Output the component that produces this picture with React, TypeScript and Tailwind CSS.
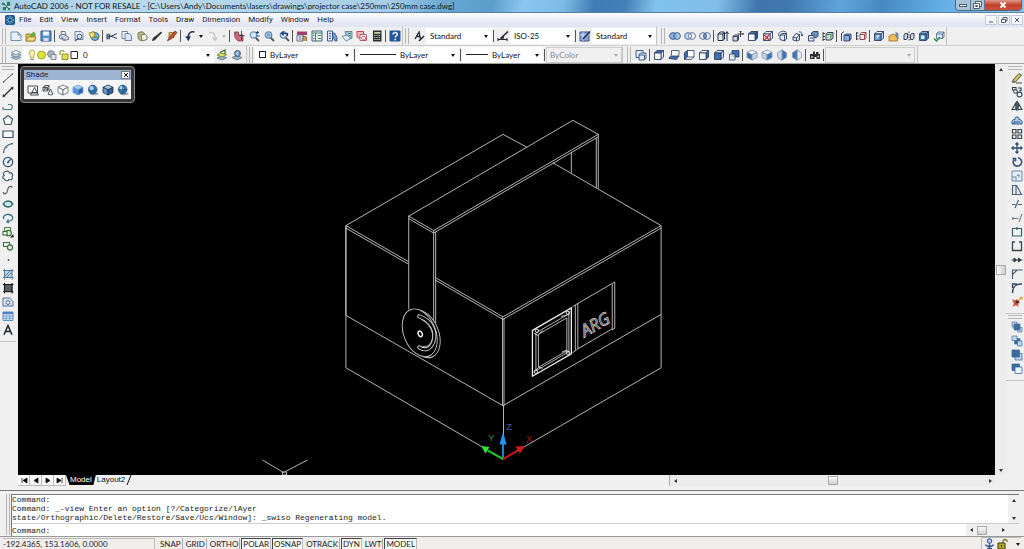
import type { ReactNode } from "react";

const N = "#2d3f66";
const B = "#4f86c6";
const L = "#b9d4f0";

function Box({ top = "#fff", front = "#fff", side = "#fff", stroke = N }) {
  return (
    <g stroke={stroke} strokeWidth="0.9" strokeLinejoin="round">
      <path d="M1.5 4 4 1.5h6.5L8 4z" fill={top} />
      <path d="M8 4l2.5-2.5V8L8 10.5z" fill={side} />
      <path d="M1.5 4H8v6.5H1.5z" fill={front} />
    </g>
  );
}

function Iso({ top = L, left = B, right = "#e8f0fa", stroke = N }) {
  return (
    <g stroke={stroke} strokeWidth="0.8" strokeLinejoin="round">
      <path d="M6 1l5 2.3L6 5.8 1 3.3z" fill={top} />
      <path d="M1 3.3l5 2.5V11L1 8.6z" fill={left} />
      <path d="M11 3.3L6 5.8V11l5-2.4z" fill={right} />
    </g>
  );
}

function Ball({ flat = false }) {
  return (
    <g>
      <ellipse cx="7" cy="9.8" rx="4.5" ry="1.4" fill="#9aa4ad" />
      <circle cx="5.7" cy="5.5" r="4.4" fill="#2f6fa8" stroke="#234f7c" strokeWidth="0.6" />
      <circle cx="4.6" cy="4.2" r="2.1" fill="#a8d5f2" />
      {flat && <path d="M5.7 1v9M1.4 5.5h8.6" stroke="#173f66" strokeWidth="0.6" />}
    </g>
  );
}

function Lens({ color = "#6f95c0" }) {
  return (
    <g fill="none">
      <path d="M7.5 7.5L11 11" stroke="#555" strokeWidth="1.8" />
      <circle cx="5.5" cy="5" r="3.2" fill="#dceaf8" stroke={color} strokeWidth="1.3" />
    </g>
  );
}

// every glyph sits on a 12x12 grid
const icons: Record<string, ReactNode> = {
  New: <path d="M1 2h7l3 3v5.5H1z M8 2v3h3" fill="#e8f1fb" stroke="#6d8fb5" />,
  Open: (
    <g>
      <path d="M1 4h4l1 1h4v6H1z" fill="#e6c34a" stroke="#8c6d1e" strokeWidth="0.8" />
      <path d="M4 5l5-3.5L11 4 7 8z" fill="#6fae4a" />
      <path d="M1 11l2-4h8l-2 4z" fill="#f4df80" stroke="#8c6d1e" strokeWidth="0.7" />
    </g>
  ),
  Save: (
    <g>
      <path d="M1 1h10v10H1z" fill="#5b8fc9" stroke="#34598a" />
      <path d="M3 1.5h6v4H3z" fill="#eef5fc" />
      <path d="M3.5 8h5v3h-5z" fill="#d5dde6" />
    </g>
  ),
  Plot: (
    <g stroke="#5f6c80" strokeWidth="0.9">
      <path d="M3 1.5h4l1 3.5H3.5z" fill="#fff" />
      <path d="M1.5 5.5L5 4l5.5 3v2.5L6 10.5 1.5 8z" fill="#cdd5e0" />
      <path d="M3 7.5l4 2" />
    </g>
  ),
  "Plot Preview": (
    <g>
      <path d="M2 1.5h6l2 2v6H2z" fill="#e4eefa" stroke="#6b86a8" />
      <circle cx="6.5" cy="6.5" r="2.4" fill="#cfe4f7" stroke="#4b5d78" />
      <path d="M5 8.5L2 11" stroke="#4b5d78" strokeWidth="1.5" />
    </g>
  ),
  Publish: (
    <g>
      <circle cx="7" cy="6.5" r="4" fill="#7fb3df" stroke="#3c6791" />
      <path d="M1 3l5-1.5 1 4.5-4 2z" fill="#f0dc6a" stroke="#8f7a2c" strokeWidth="0.8" />
      <path d="M6 8c2-2 3-1 4 0" stroke="#5c9b45" strokeWidth="1.4" />
    </g>
  ),
  Cut: <path d="M11 3.5L3.5 7M11 8.5L3.5 5.5M1 4.2h2.4V6H1zM1 7h2.4v1.8H1z" stroke="#455066" strokeWidth="1.1" />,
  Copy: (
    <g stroke="#5d7697" strokeWidth="0.9">
      <path d="M1 1.5h5.5v7H1z" fill="#fff" />
      <path d="M4 3.5h4.5L10.5 6v4.5H4z" fill="#d9e7f7" />
    </g>
  ),
  Paste: (
    <g stroke="#6a6f55" strokeWidth="0.9">
      <path d="M2 3l4-1.5L9 4v5l-5 1.5L2 8z" fill="#b9bd83" />
      <path d="M5 5l4-1 2 2v3.5L6 11z" fill="#eef1e2" />
    </g>
  ),
  "Match Properties": <path d="M1.5 10.5C2 8 3 7 4.5 6.5L10 2l.6.8-5 5c-1.1 1.7-2.6 2.7-4.1 2.7z" fill="#2d2a2a" stroke="#2d2a2a" strokeWidth="0.8" />,
  "Block Editor": (
    <g>
      <path d="M3 2.5h5v5H3z" fill="#e2b64f" stroke="#8c6a28" strokeWidth="0.8" />
      <path d="M1.5 10.8l2-4L9 1l2 1.5-5 6z" fill="#c2553a" stroke="#6b2a1f" strokeWidth="0.7" />
    </g>
  ),
  Undo: (
    <g>
      <path d="M10.5 2C6.5 1 4 3.5 4.2 8" stroke="#26365c" strokeWidth="1.6" />
      <path d="M1.2 6.5l3.3 4.7L6.8 6z" fill="#26365c" />
    </g>
  ),
  Redo: <path d="M2 2.5c3.5-.7 6 1 6 4V10M5.8 7.5L8 10.5l2.2-3" stroke="#c3c7cc" strokeWidth="1.3" />,
  Pan: (
    <g>
      <path d="M1.5 2h4v3H10v6H5L2 7.5z" fill="#c96a78" stroke="#7c3646" strokeWidth="0.8" />
      <path d="M8.5 1v9M6 5.5h5.5" stroke="#26406b" strokeWidth="0.9" />
    </g>
  ),
  "Zoom Realtime": (
    <g>
      <Lens />
      <path d="M9.5 1v3M8 2.5h3M8.5 6h3" stroke="#26406b" />
    </g>
  ),
  "Zoom Window": (
    <g>
      <Lens color="#5a7fae" />
      <path d="M4 3.5h3v3H4z" fill="#5e9ad1" />
    </g>
  ),
  "Zoom Previous": (
    <g>
      <Lens color="#5a7fae" />
      <path d="M9.5 6V3.5h-5M6 1.5l-2.5 2 2.5 2" stroke="#1e3766" strokeWidth="1.2" />
    </g>
  ),
  Properties: (
    <g>
      <path d="M1 1.5h10V5H1z" fill="#a33f6a" />
      <path d="M1 5h6v6H1z" fill="#fff" stroke="#5c6d8b" />
      <path d="M2.5 7h3M2.5 9h3" stroke="#42628e" />
      <path d="M6.5 11l1-5 3 1v4" fill="#c99a5a" stroke="#6c4f2c" strokeWidth="0.7" />
    </g>
  ),
  DesignCenter: (
    <g>
      <path d="M1 1h10v10H1z" fill="#e5f2ee" stroke="#3c6a80" />
      <path d="M1 3h10M4.5 3v8M7 5.5h3M7 8.5h3M2 5.5h1.5M2 8.5h1.5" stroke="#3f8272" />
    </g>
  ),
  "Tool Palettes": (
    <g>
      <path d="M1.5 1h5v10h-5z" fill="#dbe8f6" stroke="#3c5f90" />
      <path d="M3 3.5h2M3 6h2M3 8.5h2" stroke="#34598a" />
      <path d="M6.5 3h2L11 7v4H9L6.5 6.5z" fill="#6f9fcc" stroke="#26406b" strokeWidth="0.7" />
    </g>
  ),
  "Sheet Set Manager": (
    <g>
      <path d="M4 1.5h7v7H6z" fill="#9fc0d8" stroke="#56788f" strokeWidth="0.8" />
      <path d="M1 6.5L6 5l4 3.5L5 11z" fill="#e3edf5" stroke="#56788f" strokeWidth="0.8" />
      <path d="M7 3.5h3M7.5 5.5H10" stroke="#4e8b77" />
    </g>
  ),
  "Markup Set Manager": (
    <g>
      <path d="M1 1.5h6.5v6L5 9 1 7z" fill="#f4b9bd" stroke="#c8454c" />
      <path d="M4 4.5h6.5v6H4z" fill="#fff" stroke="#b0606a" />
      <path d="M5.5 8.5c0-3 4-3 4 0s-3 1-4 0z" stroke="#cc3b43" />
    </g>
  ),
  QuickCalc: (
    <g>
      <path d="M2 .5h8.5v11H2z" fill="#2c2f2c" />
      <path d="M3.3 2h6v1.8h-6z" fill="#c9d6a6" />
      <path d="M3.3 5.5h6M3.3 7.5h6M3.3 9.5h6" stroke="#d6d8d6" strokeDasharray="1.2 1" />
    </g>
  ),
  Help: (
    <g>
      <rect x=".5" y=".5" width="11" height="11" rx="1" fill="#23579c" />
      <path d="M4 4.5c0-2.7 4.2-2.5 4.2 0 0 1.5-2 1.5-2 3M6.2 8.8v1.4" stroke="#fff" strokeWidth="1.5" />
    </g>
  ),
  "Text Style": (
    <g stroke="#202838">
      <path d="M2 9l4-7 1.5 7M3.5 6.5h4" strokeWidth="1.3" />
      <path d="M6 11l5-5" stroke="#303030" strokeWidth="1.6" />
    </g>
  ),
  "Dim Style": (
    <g stroke="#26292f">
      <path d="M.5 9.5h10M1 8v3M10 8v3" strokeWidth="1.1" />
      <path d="M3.5 8.5L11 1.5M4 8.5l3-1" strokeWidth="1.7" />
    </g>
  ),
  "Table Style": (
    <g>
      <path d="M1 2h9v9H1z" fill="#8ba6d6" stroke="#3c5488" />
      <path d="M1 5h9M4 2v9" stroke="#e5edf9" strokeWidth="0.7" />
      <path d="M4 9l7-7.5" stroke="#24355a" strokeWidth="1.7" />
    </g>
  ),
  Union: (
    <g stroke="#33578a" strokeWidth="0.9" fill="#8fb2dd">
      <circle cx="4" cy="6" r="3.4" />
      <circle cx="8" cy="6" r="3.4" fillOpacity="0.6" />
    </g>
  ),
  Subtract: (
    <g stroke="#4a6894" strokeWidth="0.9">
      <circle cx="8" cy="6" r="3.4" fill="#fff" />
      <circle cx="4" cy="6" r="3.4" fill="#c3d6ee" />
      <path d="M6 3.5c-2 1.5-2 3.5 0 5 2-1.5 2-3.5 0-5z" fill="#fff" />
    </g>
  ),
  Intersect: (
    <g stroke="#4a6894" strokeWidth="0.9">
      <path d="M6 3.3c-2 1.5-2 3.9 0 5.4 2-1.5 2-3.9 0-5.4z" fill="#7fa5d6" />
      <circle cx="4" cy="6" r="3.4" />
      <circle cx="8" cy="6" r="3.4" />
    </g>
  ),
  "Extrude Faces": (
    <g>
      <path d="M1 4l2-2h4.5v7L6 10.5H1zM1 4h5v6.5M6 4l1.5-2" fill="#e7ecf4" stroke="#26304a" />
      <path d="M10 11V2M8.5 4L10 1.5 11.5 4" stroke="#26304a" />
    </g>
  ),
  "Move Faces": (
    <g stroke="#26304a" strokeWidth="0.9">
      <path d="M1 6.5h4.5V11H1zM1 6.5L2.5 5h4v4.5L5.5 11" fill="#cdd7e6" />
      <path d="M8.5 1v6M5.5 4h6M7.5 2l1-1 1 1M10.5 3l1 1-1 1" />
    </g>
  ),
  "Offset Faces": <Box top="#54708f" front="#fff" side="#2d568c" />,
  "Delete Faces": (
    <g>
      <Box />
      <path d="M2.5 5L7 10M7 5l-4.5 5" stroke="#cf2630" strokeWidth="1.3" />
    </g>
  ),
  "Rotate Faces": (
    <g stroke={N} strokeWidth="0.9">
      <path d="M3 5h4.5l2-1.5V9l-2 2L3 9.5zM3 5l2-1.5h4.5M7.5 5v6" fill="#e2eaf5" />
      <path d="M1.5 6C1 2 5 .5 8 1.5l1.5 1" />
    </g>
  ),
  "Taper Faces": (
    <g stroke={N} strokeWidth="0.9">
      <path d="M1 7l3-3.5 3.5 1V10l-3 1L1 10zM1 7l3.5 1v3M4.5 8l3-3.5" fill="#e2eaf5" />
      <path d="M7 2c2-1 3 1 3 4M9 4.5L10 6l1-1.5" />
    </g>
  ),
  "Copy Faces": (
    <g stroke={N} strokeWidth="0.9">
      <path d="M4.5 3L6 1.5h5V6L9.5 7.5h-5z" fill="#6d8dbb" />
      <path d="M1.5 5.5H7V11H1.5z" fill="#dce6f3" />
      <path d="M3 8h3" />
    </g>
  ),
  "Color Faces": (
    <g stroke="#26304a" strokeWidth="0.9">
      <path d="M1 2v9M1 3.5h2M1 6.5h2M1 9.5h2" />
      <path d="M4 4.5l1.5-2H11V8l-2 2H4z" fill="#c9dfd0" />
      <path d="M4 4.5h5V10M9 4.5l2-2" stroke="#2c7a4b" />
    </g>
  ),
  "Copy Edges": (
    <g stroke={N} strokeWidth="0.9">
      <path d="M1.5 11V3.5L4 1.5" stroke="#26304a" />
      <path d="M4 5.5L5.5 4H11v5l-1.5 2H4z" fill="#8caedb" />
      <path d="M4 5.5h5.5V11" />
    </g>
  ),
  "Color Edges": (
    <g strokeWidth="0.9">
      <path d="M1.5 2v8M1.5 3h2M1.5 6h2M1.5 9h2" stroke="#26304a" />
      <path d="M5 4.5l1.5-2H11v5l-1.5 2H5zM5 4.5h4.5v5M9.5 4.5l1.5-2" stroke="#8b3344" />
    </g>
  ),
  Imprint: (
    <g>
      <Box top="#e6eef8" front="#5e93d6" side={L} />
      <path d="M3 9l3.5-3.5M3 6h3" stroke="#fff" />
    </g>
  ),
  Clean: (
    <g>
      <path d="M1 6l4-2 4.5 2v5H1z" fill="#f0bd55" stroke="#9c6b28" strokeWidth="0.8" />
      <path d="M7.5 1.5l3 2V9l-3-2z" fill="#7a8699" />
    </g>
  ),
  Separate: (
    <g stroke="#26304a" strokeWidth="0.9" fill="#cdd6e4">
      <path d="M1 5l1-1.5h2.5V8l-1 1.5H1zM7.5 5l1-1.5H11V8l-1 1.5H7.5z" />
      <path d="M6 1.5V11" strokeDasharray="1.5 1" />
    </g>
  ),
  Shell: (
    <g>
      <Box top="#7fa6cf" front="#3f7ab0" side={B} />
      <path d="M3 5.5h3.5V9H3z" fill="#dff0f4" />
    </g>
  ),
  Check: (
    <g>
      <path d="M3.5 4L5 2h6v5L9.5 8.5h-6zM3.5 4h6v4.5M9.5 4L11 2" fill="#dfeaf3" stroke="#44608a" strokeWidth="0.8" />
      <path d="M1 8.5L3.5 11 7 7" stroke="#2f9a4d" strokeWidth="1.6" />
    </g>
  ),
  Layers: (
    <g stroke="#6b8196" strokeWidth="0.8">
      <path d="M1 8.5l5-2 5 2-5 2z" fill="#9db8c9" />
      <path d="M1 6l5-2 5 2-5 2z" fill="#c4d6e0" />
      <path d="M1 3.5l5-2 5 2-5 2z" fill="#f3f7fa" />
    </g>
  ),
  "Make Layer Current": (
    <g strokeWidth="0.8">
      <path d="M1 9l4-2 6 1.5L6 11z" fill="#9db8c9" stroke="#55708a" />
      <path d="M1 6l4-2 6 1.5L6 8z" fill="#dfe36b" stroke="#6a7a2c" />
      <path d="M4 3.5L9 1v4" stroke="#3d6b33" strokeWidth="1.2" />
    </g>
  ),
  "Layer Previous": (
    <g strokeWidth="0.8">
      <path d="M1 8.5l5-2 5 2L6 11z" fill="#9db8c9" stroke="#55708a" />
      <circle cx="6.5" cy="4.5" r="3" fill="#7095bd" stroke="#2c4c78" />
      <path d="M7.5 3L5 4.5 7.5 6" stroke="#fff" />
    </g>
  ),
  "Named Views": (
    <g stroke="#34507c" strokeWidth="0.9">
      <path d="M1 1.5h7v7H1z" fill="#e2ebf6" />
      <path d="M4 6l1.5-2H11v5l-1.5 2H4zM4 6h5.5v5" fill="#dfe9f6" />
    </g>
  ),
  "Top View": <Box top="#3f6fb3" />,
  "Bottom View": (
    <g stroke={N} strokeWidth="0.8" fill="#fff">
      <path d="M3.5 1.5H11V6L8 9H1l2.5-3z" />
      <path d="M1 9.5L3.5 7H11l-2.5 3.5z" fill="#3f6fb3" />
    </g>
  ),
  "Left View": (
    <g stroke={N} strokeWidth="0.8">
      <path d="M4 1.5h7V8l-3 2.5H1.5V4z" fill="#fff" />
      <path d="M1.5 4l3-2.5V8l-3 2.5z" fill="#3f6fb3" />
      <path d="M4.5 8H11" />
    </g>
  ),
  "Right View": <Box side="#3f6fb3" />,
  "Front View": <Box front="#3f6fb3" top="#dfe9f6" side="#dfe9f6" />,
  "Back View": (
    <g stroke={N} strokeWidth="0.8">
      <path d="M4 1.5h7V8H4z" fill="#3f6fb3" />
      <path d="M1.5 5H7v6H1.5z" fill="#eef3fa" fillOpacity="0.8" />
    </g>
  ),
  "SW Isometric": <Iso top="#f2f6fb" left="#3f6fa3" right="#c6d6ea" stroke="#7d93b0" />,
  "SE Isometric": <Iso top="#f2f6fb" left="#c6d6ea" right="#3f76bd" stroke="#7d93b0" />,
  "NE Isometric": (
    <g stroke="#7d93b0" strokeWidth="0.8">
      <path d="M6 .8l4.500 3v4.5L6 11.2z" fill="#4674ae" />
      <path d="M6 .8v10.4L1.5 8.3V3.8z" fill="#c9d8ea" />
    </g>
  ),
  "NW Isometric": (
    <g stroke="#7d93b0" strokeWidth="0.8">
      <path d="M6 .8l4.5 3v4.5L6 11.2z" fill="#e3ecf7" />
      <path d="M6 .8v10.4L1.5 8.3V3.8z" fill="#4674ae" />
    </g>
  ),
  Camera: (
    <g fill="#2b2d30">
      <path d="M1 5h3V2.5h2V5h1V3h2.5v2H11v5H7.5V8h-2v2H1z" />
      <circle cx="9.2" cy="7.5" r="1" fill="#c8c8c8" />
      <circle cx="3" cy="8" r="1" fill="#c8c8c8" />
    </g>
  ),
  Line: (
    <g stroke="#4b5560">
      <path d="M1.5 10l9-8" />
      <path d="M1 10h1M10 2h1" strokeWidth="1.5" />
    </g>
  ),
  "Construction Line": (
    <g stroke="#26333d">
      <path d="M1 11L11 1" strokeWidth="1.3" />
      <path d="M9 2h1.5v1.5M1.5 8.5V10H3" strokeWidth="1.5" />
    </g>
  ),
  Polyline: <path d="M1 9.5h7c3 0 3-5 0-5H6M1 7v2.5" stroke="#557784" strokeWidth="1.2" />,
  Polygon: <path d="M6 1.5L10.5 5 9 10.5H3L1.5 5z" fill="#fff" stroke="#3e5b62" strokeWidth="1.2" />,
  Rectangle: <path d="M1 3h10v6.5H1z" fill="#f5f8fb" stroke="#3c4f63" strokeWidth="1.2" />,
  Arc: <path d="M1.5 11C1.5 6 5 2 11 1.5M1 10h1.5M4 4.5l1.5 1M10 1v1.5" stroke="#3e6278" strokeWidth="1.2" />,
  Circle: (
    <g stroke="#34506f">
      <circle cx="6" cy="6" r="4.7" fill="#e9f1fa" strokeWidth="1.2" />
      <path d="M6 6l3-3M5 6.5h2" strokeWidth="1.3" />
    </g>
  ),
  "Revision Cloud": <path d="M3.5 1.5c2-1 4 0 4 1.5 3-.5 4 2 2.5 3.5 1.5 2-1 4-3 3-1 2-4.5 1.5-4.5-.5C0 8.5.5 6 2.200 5.5 1 4 1.5 2 3.5 1.5z" fill="#f3f5f8" stroke="#3e4f5c" strokeWidth="1.1" />,
  Spline: <path d="M1 8c1 3 4 2 4.5-1.5S8 1 10.5 3.5" stroke="#54606a" strokeWidth="1.2" />,
  Ellipse: (
    <g stroke="#26605f" strokeWidth="1.2">
      <ellipse cx="6" cy="6" rx="4.2" ry="2.8" fill="#cfe6ea" />
      <path d="M.5 6h2M9.5 6h2M6 2.5v1M6 8.5v1" />
    </g>
  ),
  "Ellipse Arc": <path d="M2 7C0 4 4 2 7 2.5c4 .5 5 4 2 6L5 10M6.5 7.5L5 10l2 1" stroke="#3e6d80" strokeWidth="1.3" />,
  "Insert Block": (
    <g strokeWidth="1.1">
      <path d="M2.5 1.5h6v5h-6z" fill="#e1f1df" stroke="#548a4c" />
      <circle cx="6.5" cy="7" r="2.8" fill="#d9ead6" stroke="#35682f" />
      <path d="M1 5.5h4V9H1z" fill="#fff" stroke="#35682f" />
      <path d="M8 11.5h3.5V8z" fill="#111" />
    </g>
  ),
  "Make Block": (
    <g strokeWidth="1.1">
      <path d="M1.5 2.5h6v4h-6z" fill="#eef6ec" stroke="#3c6d45" />
      <circle cx="8" cy="7.5" r="2.6" fill="#d9ead6" stroke="#3c6d45" />
    </g>
  ),
  Point: <circle cx="6.5" cy="6" r="0.9" fill="#2b5a66" />,
  Hatch: (
    <g>
      <path d="M2 2h8.5v8H2z" fill="#b9d4ec" />
      <path d="M1 2.5h10.5M1 9.5h10.5M2.5 1v10.5M10 1v10.5M3 8l5-5M5 9l4.5-4.5" stroke="#4a6f94" strokeWidth="0.9" />
    </g>
  ),
  Gradient: (
    <g>
      <path d="M2 2.5h8.5V10H2z" fill="#5a5f66" />
      <path d="M1 2.5h10.5M1 9.8h10.5M2.5 1v10.5M10 1v10.5" stroke="#17191c" strokeWidth="1.1" />
    </g>
  ),
  Region: (
    <g stroke="#4c6b97">
      <path d="M1 2h6.5L11 5.5V10H1z" fill="#e2ecf8" />
      <circle cx="6" cy="6.5" r="2" />
    </g>
  ),
  Table: (
    <g>
      <path d="M1 2h10v8.5H1z" fill="#cfe1f5" stroke="#5a8cc6" />
      <path d="M1 3h10" stroke="#4d80bd" strokeWidth="2" />
      <path d="M1 6h10M1 8.3h10M4.3 3v7.5M7.7 3v7.5" stroke="#6b9ad0" strokeWidth="0.8" />
    </g>
  ),
  "Multiline Text": <path d="M2 10.8L6 1.5l4 9.3M3.5 7.5h5" stroke="#23272b" strokeWidth="1.5" />,
  Erase: (
    <g>
      <path d="M1.5 8.5l6.5-7L10.5 3l-6 7z" fill="#c9c66c" stroke="#4f4c2a" strokeWidth="0.9" />
      <path d="M1.5 8.5l3 1.5-1 1H1z" fill="#8a6a60" />
      <path d="M5 11h6" stroke="#444" />
    </g>
  ),
  "Copy Object": (
    <g fill="#fff" stroke="#33444f" strokeWidth="1.1">
      <path d="M1.5 1.5H5V4H1.5z" />
      <circle cx="4.5" cy="5.5" r="1.8" />
      <circle cx="8.5" cy="8.5" r="2.4" />
      <path d="M7 2h3v3M8.7 4L10 5.3" fill="none" />
    </g>
  ),
  Mirror: <path d="M1 9.5h3.8V3zM11 9.5H7.2V3zM6 1v10" fill="#dfe6ec" stroke="#33444f" strokeWidth="1.1" />,
  Offset: <path d="M1 10V7.5c0-1.5 2-2 3-2C3 2 9 2 8 5.5c1 0 3 .5 3 2V10zM3 10V8h6" fill="#a9c8e6" stroke="#2f5b8c" />,
  Array: <path d="M1.5 1.5H5V5H1.5zM7 1.5h3.5V5H7zM1.5 7H5v3.5H1.5zM7 7h3.5v3.5H7z" fill="#f4f6f8" stroke="#39444d" strokeWidth="1.2" />,
  Move: <path d="M6 1v10M1 6h10M4.5 2.5L6 1l1.5 1.5M4.5 9.5L6 11l1.5-1.5M2.5 4.5L1 6l1.5 1.5M9.5 4.5L11 6 9.5 7.5" stroke="#2e4a6c" strokeWidth="1.3" />,
  Rotate: <path d="M3 3.5a4.2 4.2 0 1 0 4-1.7M1.5 2.5h3v3" stroke="#3a5278" strokeWidth="1.6" />,
  Scale: (
    <g fill="#e6edf5" stroke="#6e88a8">
      <path d="M1 1h10v10H1z" />
      <path d="M1 7h4v4M5.5 6L8 4.5v3" fill="none" />
    </g>
  ),
  Stretch: <path d="M1.5 1.5h4l5 9h-9zM5 2v8.5" fill="#e6edf5" stroke="#4c5d75" strokeWidth="1.1" />,
  Trim: <path d="M1 6.5h3.5M7 6.5h4M4 10l3.5-8" stroke="#4c6070" strokeWidth="1.2" />,
  Extend: <path d="M1 6.5h6.5M8 10l3-8M2 5v3" stroke="#75848e" strokeWidth="1.1" />,
  "Break at Point": <path d="M1.5 2.5h9V10h-9zM6 1v3" fill="#f0f6f2" stroke="#3c5c5c" strokeWidth="1.2" />,
  Break: <path d="M4 2H1.5v8.5h9V2H8" stroke="#3a434b" strokeWidth="1.3" />,
  Join: <path d="M.5 6h11M3 4l2.5 2L3 8zM7.500 4L10 6 7.500 8z" fill="#2b3036" stroke="#2b3036" strokeWidth="0.9" />,
  Chamfer: <path d="M1.5 11V6.5L6 2h5.5M1.5 6.5V2H6" stroke="#45596e" strokeWidth="1.1" />,
  Fillet: <path d="M1.5 11C1.5 5 4 2 11 2M1.5 6V2H6" stroke="#31465c" strokeWidth="1.3" />,
  Explode: (
    <g>
      <path d="M1 3l3 1.5L6 3l.5 2.5L9 6 7 8l.5 3L5 9l-3.5 2L3 7.5z" fill="#d04a38" />
      <path d="M6 6l4.5-4.5M9 1.5h2v2" stroke="#e0a23a" strokeWidth="1.4" />
      <circle cx="6.5" cy="6" r="1.4" fill="#33282a" />
    </g>
  ),
  "Bring to Front": (
    <g stroke="#44709f" strokeWidth="0.7">
      <path d="M1 1h5v5H1zM6.5 6.5H11V11H6.5z" fill="#bfd6ee" />
      <path d="M3 3h6v6H3z" fill="#3d6d9f" />
    </g>
  ),
  "Send to Back": (
    <g stroke="#44709f" strokeWidth="0.7">
      <path d="M3.5 3.5H9V9H3.5z" fill="#3d6d9f" />
      <path d="M1 1h5v4.5H1zM6.5 6H11v5H6.5z" fill="#bfd6ee" />
    </g>
  ),
  "Bring Above": (
    <g stroke="#34608f" strokeWidth="0.7">
      <path d="M4 4.5h7V11H4z" fill="#bfd6ee" />
      <path d="M1 1h7.5v7H1z" fill="#3d6d9f" />
    </g>
  ),
  "Send Under": (
    <g stroke="#34608f" strokeWidth="0.7">
      <path d="M1 1h7.5v6.5H1z" fill="#3d6d9f" />
      <path d="M4 4h7v6.5H4z" fill="#eaf1f9" />
    </g>
  ),
  "2D Wireframe": <path d="M1 2h9.5v7H1zM3.5 11l4-7.5 4 7.5zM5 8.5h5" fill="#fff" stroke="#33383e" strokeWidth="0.9" />,
  "3D Wireframe": (
    <g stroke="#3f464e" strokeWidth="0.9">
      <path d="M1 3.5l2-2h4V5L5.5 7H1zM1 3.5h4.5V7M5.5 3.5L7 1.5M3 1.5V5h4M3 5L1 7" />
      <path d="M6 10l2.5-5L11 10c-1 1.2-4 1.2-5 0z" fill="#e6e6e6" />
    </g>
  ),
  Hidden: <Iso top="#fff" left="#fff" right="#fff" stroke="#5a6068" />,
  "Flat Shaded": <Iso top="#a7d0f2" left="#4f93d6" right="#2c66ad" stroke="#6aa0d8" />,
  "Gouraud Shaded": <Ball />,
  "Flat Shaded, Edges On": <Iso top="#a7c8ec" left="#5f97cf" right="#35619c" stroke="#1d2f4d" />,
  "Gouraud Shaded, Edges On": <Ball flat />,
};

const ROW_ONE = {
  file: ["New", "Open", "Save"],
  plot: ["Plot", "Plot Preview", "Publish"],
  edit: ["Cut", "Copy", "Paste", "Match Properties", "Block Editor"],
  zoom: ["Pan", "Zoom Realtime", "Zoom Window", "Zoom Previous"],
  palettes: ["Properties", "DesignCenter", "Tool Palettes", "Sheet Set Manager", "Markup Set Manager", "QuickCalc"],
  booleans: ["Union", "Subtract", "Intersect"],
  faces: ["Extrude Faces", "Move Faces", "Offset Faces", "Delete Faces", "Rotate Faces", "Taper Faces", "Copy Faces", "Color Faces"],
  edges: ["Copy Edges", "Color Edges"],
  bodies: ["Imprint", "Clean", "Separate", "Shell", "Check"],
};

const ORTHO_VIEWS = ["Top View", "Bottom View", "Left View", "Right View", "Front View", "Back View"];
const ISO_VIEWS = ["SW Isometric", "SE Isometric", "NE Isometric", "NW Isometric"];

const DRAW_TOOLS = [
  "Line", "Construction Line", "Polyline", "Polygon", "Rectangle", "Arc", "Circle", "Revision Cloud", "Spline", "Ellipse",
  "Ellipse Arc", "Insert Block", "Make Block", "Point", "Hatch", "Gradient", "Region", "Table", "Multiline Text",
];

const MODIFY_TOOLS = [
  "Erase", "Copy Object", "Mirror", "Offset", "Array", "Move", "Rotate", "Scale", "Stretch", "Trim", "Extend",
  "Break at Point", "Break", "Join", "Chamfer", "Fillet", "Explode",
];

const ORDER_TOOLS = ["Bring to Front", "Send to Back", "Bring Above", "Send Under"];

const SHADE_TOOLS = [
  "2D Wireframe", "3D Wireframe", "Hidden", "Flat Shaded", "Gouraud Shaded", "Flat Shaded, Edges On", "Gouraud Shaded, Edges On",
];

const MENUS = ["File", "Edit", "View", "Insert", "Format", "Tools", "Draw", "Dimension", "Modify", "Window", "Help"];

const MODES = [
  { name: "SNAP", on: false },
  { name: "GRID", on: false },
  { name: "ORTHO", on: false },
  { name: "POLAR", on: true },
  { name: "OSNAP", on: true },
  { name: "OTRACK", on: false },
  { name: "DYN", on: true },
  { name: "LWT", on: false },
  { name: "MODEL", on: true },
];

function Tool({ name }: { name: string }) {
  return (
    <button type="button" aria-label={name} className="flex h-[14px] w-[15px] shrink-0 items-center justify-center">
      <svg viewBox="0 0 12 12" className="size-3" fill="none">
        {icons[name]}
      </svg>
    </button>
  );
}

function Tools({ names }: { names: string[] }) {
  return names.map((name) => <Tool key={name} name={name} />);
}

function Sep() {
  return (
    <div className="flex w-[3px] shrink-0 justify-center">
      <div className="h-3 w-px bg-[#555]" />
    </div>
  );
}

function Grip() {
  return (
    <div className="flex h-4 w-2 shrink-0 justify-center gap-0.5">
      <div className="w-px bg-[#b4b4b4]" />
      <div className="w-px bg-[#b4b4b4]" />
    </div>
  );
}

function FlatGrip() {
  return (
    <div className="flex h-1.5 w-full shrink-0 flex-col justify-center gap-0.5 px-0.5">
      <div className="h-px bg-[#b4b4b4]" />
      <div className="h-px bg-[#b4b4b4]" />
    </div>
  );
}

type Dir = "up" | "down" | "left" | "right";

const ARROWS: Record<Dir, string> = {
  up: "M1 4l2-3 2 3z",
  down: "M1 2l2 3 2-3z",
  left: "M4 1L1 3l3 2z",
  right: "M2 1l3 2-3 2z",
};

function Arrow({ dir = "down", color = "#111" }: { dir?: Dir; color?: string }) {
  return (
    <svg viewBox="0 0 6 6" className="size-1.5 shrink-0" fill={color}>
      <path d={ARROWS[dir]} />
    </svg>
  );
}

function ArrowButton({ dir, label }: { dir: Dir; label: string }) {
  return (
    <button type="button" aria-label={label} className="flex size-[11px] shrink-0 items-center justify-center">
      <Arrow dir={dir} color="#333" />
    </button>
  );
}

interface ComboProps {
  label: string;
  value: string;
  width: string;
  disabled?: boolean;
  children?: ReactNode;
}

function Combo({ label, value, width, disabled, children }: ComboProps) {
  return (
    <div
      className={`flex h-4 shrink-0 items-center gap-1 border pr-0.5 pl-[3px] ${width} ${
        disabled ? "border-[#cdcdcd] bg-[#f0f0f0] text-[#8a8a8a]" : "border-white bg-white text-[#111]"
      }`}
    >
      {children}
      <select
        aria-label={label}
        defaultValue={value}
        disabled={disabled}
        className="h-full min-w-0 flex-1 appearance-none bg-transparent font-['Lato',sans-serif] text-[8px] leading-3 outline-none"
      >
        <option value={value}>{value}</option>
      </select>
      <Arrow color={disabled ? "#aaa" : "#111"} />
    </div>
  );
}

function LayerFlags() {
  return (
    <svg viewBox="0 0 52 12" className="h-3 w-[52px] shrink-0" fill="none">
      <path d="M5 1a3 3 0 0 1 1.5 5.5V9h-3V6.5A3 3 0 0 1 5 1z" fill="#f7f0a0" stroke="#a89c3c" strokeWidth="0.8" />
      <path d="M3.5 10.5h3" stroke="#777" />
      <circle cx="14.5" cy="6" r="4" fill="#dfe436" stroke="#9ca12a" />
      <circle cx="24" cy="5" r="3.4" fill="#a9b3bc" stroke="#7c8791" />
      <path d="M24 5.5h5v5h-5z" fill="#dbe4ec" stroke="#7c8791" />
      <path d="M33 6V3c0-2 4-2 4 0" stroke="#8c9426" strokeWidth="1.2" />
      <path d="M35 5h6v5.5h-6z" fill="#dfe045" stroke="#8c9426" />
      <path d="M44 2.5h6.5v7H44z" fill="#fff" stroke="#222" />
    </svg>
  );
}

function TitleBar() {
  return (
    <header className="flex h-[13px] shrink-0 items-start justify-between border-b border-[#5b7f9f] bg-[linear-gradient(100deg,#a5cfe6_0%,#b9d9ec_14%,#a8cde8_38%,#6aa9d6_43%,#5b9dcc_48%,#8ac6ee_51%,#7dbbe6_55%,#3f7cb3_58%,#4480b8_61%,#82c2ee_64%,#80bde9_70%,#3d75ac_74%,#3f78af_77%,#5fa5da_82%,#4689c2_86%,#64b0e8_92%,#8fc4ea_100%)] pl-px">
      <div className="flex h-3 items-center gap-[3px]">
        <svg viewBox="0 0 12 12" className="size-[10px]">
          <path d="M1 1h10v10H1z" fill="#d3e8e6" />
          <path d="M1 2h4v3H1zM7 1h4v5H7zM2 7h4v4H2zM8 8h3v3H8z" fill="#2f7f75" />
          <path d="M3 3l6 6M9 2l-4 8" stroke="#1f5a63" />
        </svg>
        <h1 className="font-['Lato',sans-serif] text-[8px] leading-3 whitespace-nowrap text-[#101820]">
          AutoCAD 2006 - NOT FOR RESALE - [C:\Users\Andy\Documents\lasers\drawings\projector case\250mm\250mm case.dwg]
        </h1>
      </div>
      <div className="mr-0.5 flex h-[11px] shrink-0 overflow-hidden rounded-b-sm border border-t-0 border-[#4a6580]">
        <button type="button" aria-label="Minimize" className="flex w-[15px] items-center justify-center border-r border-[#5d7890] bg-[#a9c3d9]">
          <span className="h-[3px] w-2 border border-[#4c5c6c] bg-white" />
        </button>
        <button type="button" aria-label="Restore" className="flex w-[14px] items-center justify-center border-r border-[#5d7890] bg-[#a9c3d9]">
          <svg viewBox="0 0 9 8" className="h-2 w-[9px]" fill="#fff" stroke="#4c5c6c">
            <path d="M2.5 .5h6v5h-6z" />
            <path d="M.5 2.5h6v5h-6zM2.5 4.5h2v1h-2z" />
          </svg>
        </button>
        <button type="button" aria-label="Close" className="flex w-9 items-center justify-center bg-[linear-gradient(#dc9a8c,#c2402c_50%,#c9523c)]">
          <svg viewBox="0 0 8 8" className="size-2">
            <path d="M1.5 1.5l5 5M6.5 1.5l-5 5" stroke="#fff" strokeWidth="1.8" />
          </svg>
        </button>
      </div>
    </header>
  );
}

function MenuBar() {
  return (
    <nav className="flex h-[14px] shrink-0 items-center justify-between bg-[linear-gradient(#fbfcfe,#dfe3f2)] pl-[5px]">
      <div className="flex items-center">
        <svg viewBox="0 0 12 12" className="size-[10px]">
          <rect width="12" height="12" rx="2" fill="#1f5d92" />
          <path d="M6 1v10M1 6h10M3 3l6 6M9 3L3 9" stroke="#a8dcf2" />
          <path d="M4.5 4.5h3v3h-3z" fill="#1b4a78" />
        </svg>
        {MENUS.map((menu) => (
          <button key={menu} type="button" className="px-1 font-['Roboto',sans-serif] text-[8px] leading-3 text-[#1a1a1a]">
            {menu}
          </button>
        ))}
      </div>
      <div className="flex gap-px pr-px text-[#4a5a6a]">
        {["M2 6h4", "M3 3V1.5h4V5H5.5M1.5 3.5h4v3h-4z", "M2 2l4 4M6 2L2 6"].map((d, i) => (
          <button
            key={d}
            type="button"
            aria-label={["Minimize drawing", "Restore drawing", "Close drawing"][i]}
            className="flex h-[10px] w-3 items-center justify-center border border-[#c5ccd8] bg-[#f4f6fa]"
          >
            <svg viewBox="0 0 8 8" className="size-2" fill="none" stroke="currentColor">
              <path d={d} />
            </svg>
          </button>
        ))}
      </div>
    </nav>
  );
}

function Toolbars() {
  const bar = "flex h-full items-center border-r border-[#c4c4c4]";
  return (
    <div className="shrink-0 overflow-hidden bg-[#f0f0f0]">
      <div className="flex h-[19px] items-center border-b border-[#d0d0d0]">
        <div className={bar}>
          <Grip />
          <Tools names={ROW_ONE.file} />
          <Sep />
          <Tools names={ROW_ONE.plot} />
          <Sep />
          <Tools names={ROW_ONE.edit} />
          <Sep />
          <Tool name="Undo" />
          <button type="button" aria-label="Undo history" className="flex w-2 justify-center">
            <Arrow />
          </button>
          <Tool name="Redo" />
          <button type="button" aria-label="Redo history" className="flex w-2 justify-center">
            <Arrow color="#bbb" />
          </button>
          <Sep />
          <Tools names={ROW_ONE.zoom} />
          <Sep />
          <Tools names={ROW_ONE.palettes} />
          <Sep />
          <Tool name="Help" />
        </div>
        <div className={bar}>
          <Grip />
          <Tool name="Text Style" />
          <Combo label="Text style" value="Standard" width="w-[66px]" />
          <Sep />
          <Tool name="Dim Style" />
          <Combo label="Dimension style" value="ISO-25" width="w-[64px]" />
          <Sep />
          <Tool name="Table Style" />
          <Combo label="Table style" value="Standard" width="w-[64px]" />
        </div>
        <div className={`${bar} pl-0.5`}>
          <Grip />
          <Tools names={ROW_ONE.booleans} />
          <Sep />
          <Tools names={ROW_ONE.faces} />
          <Sep />
          <Tools names={ROW_ONE.edges} />
          <Sep />
          <Tools names={ROW_ONE.bodies} />
        </div>
      </div>
      <div className="flex h-[18px] items-center border-b border-[#a0a0a0]">
        <div className={`${bar} pr-0.5`}>
          <Grip />
          <Tool name="Layers" />
          <Combo label="Layer" value="0" width="w-[191px]">
            <LayerFlags />
          </Combo>
          <Tool name="Make Layer Current" />
          <Tool name="Layer Previous" />
        </div>
        <div className={bar}>
          <Grip />
          <Combo label="Color" value="ByLayer" width="w-[98px]">
            <span className="size-[7px] border border-[#222]" />
          </Combo>
          <Sep />
          <Combo label="Linetype" value="ByLayer" width="w-[103px]">
            <span className="h-px w-[36px] bg-[#222]" />
          </Combo>
          <Sep />
          <Combo label="Lineweight" value="ByLayer" width="w-[81px]">
            <span className="h-px w-[22px] bg-[#222]" />
          </Combo>
          <Sep />
          <Combo label="Plot style" value="ByColor" width="w-[76px]" disabled />
        </div>
        <div className={`${bar} pr-0.5 pl-0.5`}>
          <Grip />
          <Tool name="Named Views" />
          <Sep />
          <Tools names={ORTHO_VIEWS} />
          <Sep />
          <Tools names={ISO_VIEWS} />
          <Sep />
          <Tool name="Camera" />
          <Sep />
          <Combo label="View" value="" width="w-[90px]" disabled />
        </div>
      </div>
    </div>
  );
}

function ShadePalette() {
  return (
    <section className="absolute top-0.5 left-0.5 rounded border border-[#8a8a8a] bg-[#3a3a3a] p-[3px]">
      <div className="bg-[#f5f5f5]">
        <div className="flex h-[10px] items-center justify-between bg-[#9db3d4] pr-px pl-0.5">
          <h2 className="font-['Roboto',sans-serif] text-[8px] leading-[10px] text-[#1d2940]">Shade</h2>
          <button type="button" aria-label="Close" className="flex h-2 w-[9px] items-center justify-center border border-[#777] bg-white">
            <svg viewBox="0 0 6 6" className="size-1.5" stroke="#111">
              <path d="M1 1l4 4M5 1L1 5" />
            </svg>
          </button>
        </div>
        <div className="flex h-[19px] items-center px-px">
          <Tools names={SHADE_TOOLS} />
        </div>
      </div>
    </section>
  );
}

function Drawing() {
  return (
    <svg viewBox="18 64 977 412" className="size-full" fill="none" stroke="#c9c9c9" strokeWidth="0.9">
      {/* case */}
      <path d="M345.5 226L503 134.5l24 13M553 163l108.5 63" />
      <path d="M345.5 226l62.5 36M345.5 228.5l62.5 36M435 278l68 39.5L661.5 226M435 280.5l68 39.5 158.5-91.5" />
      <path d="M345.5 226v142.5L503 460l158.5-91.5V226M345.5 316L503 406.5 661.5 315" />
      <path d="M345.5 226v90M502.5 318v88M504 319v88M503.5 406v54" />

      {/* handle */}
      <path d="M408.5 216.5L573 120.5l25.5 14L433.5 231zM408.5 219l25 14.5L598.5 137" />
      <path d="M408.5 216v94M433.5 231v92M435.5 232v92M598.5 134v55M596.5 138v50M571.5 152v21" />

      {/* pivot plate */}
      <g>
        <ellipse cx="422.5" cy="334.5" rx="16" ry="25" transform="rotate(-22 422.5 334.5)" fill="#000" />
        <ellipse cx="419.5" cy="333.5" rx="16" ry="25" transform="rotate(-22 419.5 333.5)" fill="#000" />
        <path d="M419 317c12 4 18 15 14 26-3 7-8 9-14 5" stroke="#ddd" strokeWidth="4" strokeLinecap="round" />
        <path d="M419 317c12 4 18 15 14 26-3 7-8 9-14 5" stroke="#000" strokeWidth="2.2" strokeLinecap="round" />
        <path d="M421 320c8 4 13 12 11 20-1 5-5 8-10 7" />
        <ellipse cx="420" cy="334.5" rx="2" ry="3" transform="rotate(-22 420 334.5)" stroke="#fff" strokeWidth="1.4" />
      </g>

      {/* fan */}
      <path d="M532.5 331l39-22.5v46l-39 22.5z" stroke="#eee" strokeWidth="1.3" />
      <path d="M536 333.5l33-19v38l-33 19zM538.5 335l28.5-16.5v33L538.5 368z" />
      <path d="M534 334l4 2 5-5M561 317l6-1 3-4M534 373l5-5 4 1M562 353l4-2 4 2" stroke="#ddd" />
      <g stroke="#eee">
        <circle cx="537" cy="331.5" r="1.7" />
        <circle cx="568" cy="313.5" r="1.7" />
        <circle cx="536" cy="372.5" r="1.7" />
        <circle cx="568" cy="353.5" r="1.7" />
      </g>

      {/* logo plate */}
      <path d="M572.5 307.5l3-2v46l-3 2M578 304v45.5l34.5-20M575.5 305.5l39.5-23v46.5l-2.5 1.5v-46M575.5 351.5l2.5-2" />
      <text x="585" y="338" transform="rotate(-30 585 338)" strokeWidth="0.8" className="font-['Open_Sans',sans-serif] text-[17px] italic">
        ARG
      </text>

      {/* cursor */}
      <path d="M262 461l21 12.5L307 461M282 473h4v3h-4z" />

      {/* ucs icon */}
      <g strokeWidth="2">
        <path d="M503 460v-16" stroke="#1f7fd0" />
        <path d="M503 460l-15-8.5" stroke="#22c72e" />
        <path d="M503 460l14-8" stroke="#d01414" />
      </g>
      <g stroke="none">
        <path d="M503 433l3.5 12.5h-7z" fill="#2196f3" />
        <path d="M481 447l8.5 1-4 6.5z" fill="#2fe03a" />
        <path d="M525 447l-9.5.5 4.5 7z" fill="#d81818" />
        <g className="font-['Liberation_Sans',sans-serif] text-[10px]">
          <text x="506" y="431" fill="#3d58b0">Z</text>
          <text x="488" y="442" fill="#2c8a2f">Y</text>
          <text x="526" y="443" fill="#a31818">X</text>
        </g>
      </g>
    </svg>
  );
}

function LayoutTabs() {
  const steps = ["M2 1v5M7 1L3 3.5 7 6z", "M6 1L2 3.5 6 6z", "M2 1l4 2.5L2 6z", "M6 1v5M1 1l4 2.5L1 6z"];
  const labels = ["First layout", "Previous layout", "Next layout", "Last layout"];
  return (
    <div className="mr-[11px] flex h-[11px] shrink-0 bg-[#f0f0f0]">
      <div className="flex">
        {steps.map((d, i) => (
          <button key={d} type="button" aria-label={labels[i]} className="flex w-3 items-center justify-center border-r border-b border-[#bbb] bg-[#fafafa]">
            <svg viewBox="0 0 8 7" className="h-[7px] w-2" fill="#111" stroke="#111" strokeWidth="0.8">
              <path d={d} />
            </svg>
          </button>
        ))}
      </div>
      <div className="flex font-['Liberation_Sans',sans-serif] text-[8px] leading-[10px]">
        <button type="button" className="h-[10px] bg-black px-1 text-white [clip-path:polygon(0_0,100%_0,92%_100%,12%_100%)]">
          Model
        </button>
        <button type="button" className="h-[10px] px-px text-[#111]">Layout2</button>
        <svg viewBox="0 0 6 10" className="h-[10px] w-1.5" stroke="#111" fill="none">
          <path d="M5 0L1 10" />
        </svg>
      </div>
      <div className="ml-auto flex w-1/3 items-center border-l border-[#aaa] bg-[#ececec]">
        <ArrowButton dir="left" label="Scroll left" />
        <div className="flex flex-1 justify-center">
          <div className="h-[9px] w-[10px] border border-[#a9a9a9] bg-[linear-gradient(#fafafa,#cfcfcf)]" />
        </div>
        <ArrowButton dir="right" label="Scroll right" />
      </div>
    </div>
  );
}

function CommandWindow() {
  const line = "font-['Liberation_Mono',monospace] text-[8px] leading-[9px] whitespace-pre text-[#222]";
  return (
    <section className="flex h-[46px] shrink-0 border-t border-[#777] bg-[#f0f0f0] pt-[3px]">
      <div className="flex w-[11px] justify-end gap-0.5 pr-px pb-px">
        <div className="w-px bg-[#b4b4b4]" />
        <div className="w-px bg-[#b4b4b4]" />
      </div>
      <div className="mr-[5px] flex min-w-0 flex-1 flex-col border-t border-l border-[#777]">
        <div className="flex h-[29px] border-b border-[#ccc]">
          <div className="min-w-0 flex-1 bg-white">
            <p className={line}>Command:</p>
            <p className={line}>Command: _-view Enter an option [?/Categorize/lAyer</p>
            <p className={line}>state/Orthographic/Delete/Restore/Save/Ucs/Window]: _swiso Regenerating model.</p>
          </div>
          <div className="flex flex-col justify-between">
            <ArrowButton dir="up" label="Scroll history up" />
            <ArrowButton dir="down" label="Scroll history down" />
          </div>
        </div>
        <div className="flex flex-1 items-center bg-white">
          <label htmlFor="command" className={line}>
            Command:
          </label>
          <input id="command" type="text" className={`${line} min-w-0 flex-1 pl-1 outline-none`} />
          <div className="flex h-full items-center bg-[#f0f0f0]">
            <ArrowButton dir="left" label="Scroll command left" />
            <div className="mr-2.5 h-[9px] w-[10px] border border-[#a9a9a9] bg-[linear-gradient(#fafafa,#cfcfcf)]" />
            <ArrowButton dir="right" label="Scroll command right" />
            <div className="w-[11px]" />
          </div>
        </div>
      </div>
    </section>
  );
}

function StatusBar() {
  return (
    <footer className="flex h-[13px] shrink-0 items-center justify-between border-t border-[#999] bg-[#f0eeec] px-[3px] font-['Lato',sans-serif] text-[8px] leading-[10px] text-[#222]">
      <div className="flex items-center">
        <output className="mr-[3px] w-[152px] border-t border-r border-[#bbb]">-192.4365, 153.1606, 0.0000</output>
        <div className="flex gap-px">
          {MODES.map(({ name, on }) => (
            <button
              key={name}
              type="button"
              aria-pressed={on}
              className={`border-t border-r border-l px-px ${
                on ? "border-t-[#444] border-r-[#bbb] border-l-[#444] bg-[#f8f8f8]" : "border-t-transparent border-r-[#aaa] border-l-transparent"
              }`}
            >
              {name}
            </button>
          ))}
        </div>
      </div>
      <div className="flex items-center gap-0.5 border-t border-l border-[#bbb] pl-0.5">
        <svg viewBox="0 0 11 11" className="size-[11px]" fill="none" stroke="#3c4f9a">
          <circle cx="5.5" cy="3" r="2.3" fill="#b9c6e8" />
          <path d="M5.5 5v5.5M1.5 6.5c1 2.5 7 2.5 8 0M3 10.5h5" strokeWidth="1.3" />
        </svg>
        <svg viewBox="0 0 11 11" className="size-[11px]" fill="none">
          <path d="M6 5.5V3c0-2 4-2 4 0v1" stroke="#7a741c" strokeWidth="1.3" />
          <path d="M1 5h7v6H1z" fill="#b5ac24" stroke="#3a3808" />
          <path d="M4.5 7v2" stroke="#222" />
        </svg>
        <button type="button" aria-label="Status bar menu" className="flex w-[11px] justify-center pl-1">
          <Arrow />
        </button>
      </div>
    </footer>
  );
}

export default function App() {
  return (
    <div className="flex h-screen flex-col overflow-hidden bg-[#f0f0f0]">
      <TitleBar />
      <MenuBar />
      <Toolbars />
      <div className="flex min-h-0 flex-1">
        <aside className="flex w-[18px] shrink-0 flex-col items-center pt-px pr-0.5">
          <FlatGrip />
          <Tools names={DRAW_TOOLS} />
          <div className="mt-1 h-px w-full bg-[#c4c4c4]" />
        </aside>
        <main className="flex min-w-0 flex-1 flex-col pb-1">
          <div className="flex min-h-0 flex-1">
            <div className="relative min-w-0 flex-1 bg-black">
              <Drawing />
              <ShadePalette />
            </div>
            <div className="flex w-[11px] flex-col items-center bg-[#ececec]">
              <ArrowButton dir="up" label="Scroll up" />
              <div className="flex flex-1 items-center">
                <div className="h-[10px] w-[10px] border border-[#a9a9a9] bg-[linear-gradient(90deg,#fafafa,#cfcfcf)]" />
              </div>
              <ArrowButton dir="down" label="Scroll down" />
            </div>
          </div>
          <LayoutTabs />
        </main>
        <aside className="flex w-[18px] shrink-0 flex-col items-end pt-px">
          <FlatGrip />
          <Tools names={MODIFY_TOOLS} />
          <div className="mt-1 h-px w-full bg-[#c4c4c4]" />
          <FlatGrip />
          <Tools names={ORDER_TOOLS} />
          <div className="mt-1 h-px w-full bg-[#c4c4c4]" />
        </aside>
      </div>
      <CommandWindow />
      <StatusBar />
    </div>
  );
}
